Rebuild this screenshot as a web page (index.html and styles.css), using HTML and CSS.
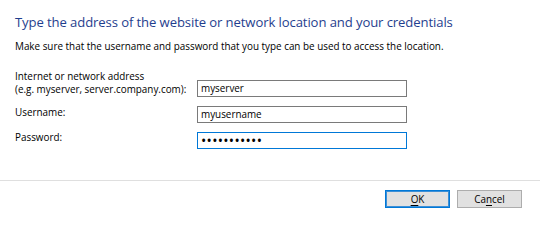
FILE: index.html
```html
<!DOCTYPE html>
<html>
<head>
<meta charset="utf-8">
<link rel="stylesheet" href="styles.css">
</head>
<body>
<div class="dialog">
  <div class="content">
    <h1 class="title">Type the address of the website or network location and your credentials</h1>
    <p class="desc">Make sure that the username and password that you type can be used to access the location.</p>
    <div class="form">
      <label class="label two">Internet or network address<br>(e.g. myserver, server.company.com):</label>
      <div class="input">myserver</div>
      <label class="label">Username:</label>
      <div class="input">myusername</div>
      <label class="label pw">Password:</label>
      <div class="input focus"><span class="dots">•••••••••••</span></div>
    </div>
  </div>
  <div class="footer">
    <button class="btn default"><u>O</u>K</button>
    <button class="btn">Ca<u>n</u>cel</button>
  </div>
</div>
</body>
</html>
```
FILE: styles.css
```css
html, body {
  margin: 0;
  padding: 0;
  background: #ffffff;
}
body {
  font-family: "Open Sans", "Noto Sans", sans-serif;
  color: #000;
  width: 540px;
  height: 242px;
  overflow: hidden;
}
.content {
  box-sizing: border-box;
  padding: 12px 15px 0 15px;
  height: 180px;
}
.title {
  margin: 0;
  font-weight: 400;
  font-size: 13.1px;
  line-height: 20px;
  color: #1f3e8e;
  letter-spacing: -0.1px;
}
.desc {
  margin: 7px 0 0 0;
  font-size: 9.9px;
  line-height: 14px;
}
.form {
  display: grid;
  grid-template-columns: 182px 210px;
  row-gap: 9px;
  margin-top: 27px;
}
.label {
  font-size: 9.9px;
  line-height: 13px;
  align-self: start;
}
.label.two {
  margin-top: -10px;
}
.label.pw {
  margin-top: -1px;
}
.input {
  height: 15px;
  border: 1px solid #7a7a7a;
  font-size: 9.9px;
  line-height: 14px;
  padding: 0 3px;
  align-self: start;
}
.input.focus {
  border-color: #0078d7;
}
.dots {
  display: inline-block;
  font-size: 14px;
  line-height: 15px;
  letter-spacing: 0.3px;
  vertical-align: top;
}
.footer {
  border-top: 1px solid #dfdfdf;
  display: flex;
  justify-content: flex-end;
  gap: 7px;
  padding: 9px 18px 0 0;
}
.btn {
  box-sizing: border-box;
  width: 65px;
  height: 18px;
  padding: 0;
  font-family: "Open Sans", "Noto Sans", sans-serif;
  font-size: 9.9px;
  line-height: 14px;
  background: #e1e1e1;
  border: 1px solid #adadad;
  color: #000;
}
.btn.default {
  border: 1px solid #0078d7;
  box-shadow: inset 0 0 0 1px #3d8fd6;
}
.btn u {
  text-decoration-thickness: 1px;
  text-underline-offset: 2px;
}
```
